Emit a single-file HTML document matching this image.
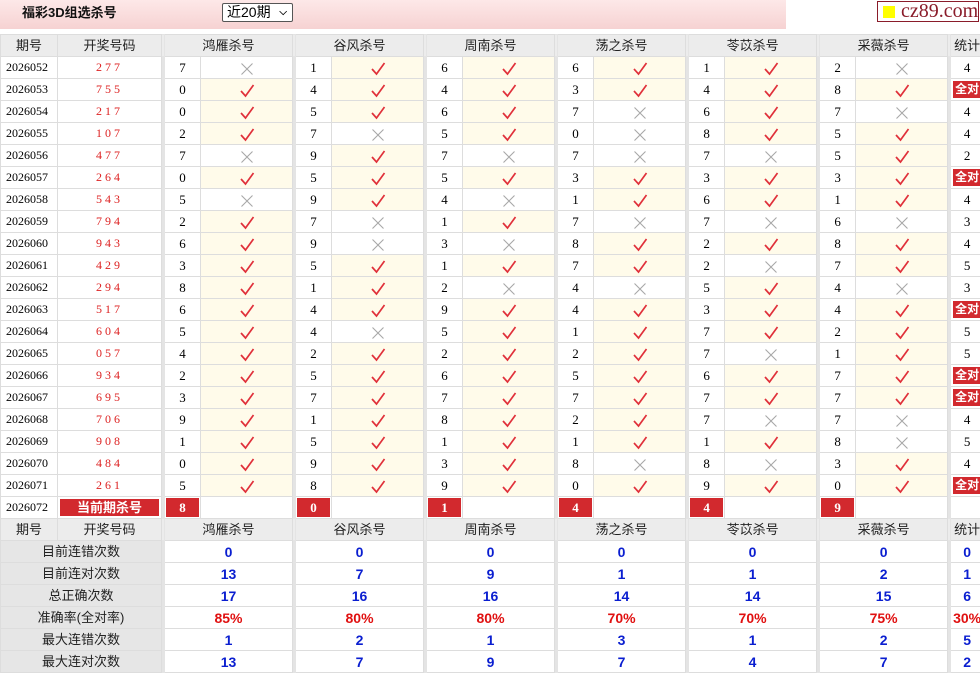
<!DOCTYPE html>
<html><head><meta charset="utf-8"><style>
*{margin:0;padding:0;box-sizing:border-box}
body{width:980px;height:670px;overflow:hidden;background:#fff;font-family:"Liberation Serif","Noto Serif CJK SC",serif;font-size:13px;color:#000}
.top{position:absolute;left:0;top:0;width:786px;height:29px;background:linear-gradient(#fde8e8,#f6d2d2)}
.title{position:absolute;left:22px;top:2px;font:bold 13px "Liberation Sans","Noto Sans CJK SC",sans-serif;color:#111}
.sel{position:absolute;left:222px;top:3px;width:71px;height:19px;border:1px solid #555;border-radius:2px;background:#fff;font:14px "Liberation Sans","Noto Sans CJK SC",sans-serif;padding-left:4px;line-height:17px}
.sel b{position:absolute;right:5px;top:0;font-size:10px}
.logo{position:absolute;left:877px;top:1px;width:102px;height:21px;border:1px solid #8a1c2a;background:#fff;font:20px "Liberation Serif",serif;color:#8a1c2a;line-height:18px;padding-left:23px}
.logo i{position:absolute;left:5px;top:4px;width:12px;height:12px;background:#ff0}
table{position:absolute;left:0;top:34px;border-collapse:collapse;table-layout:fixed;width:983px}
td{border:1px solid #ddd;height:22px;text-align:center;padding:0;white-space:nowrap;overflow:hidden;line-height:19px}
.h td{background:#ececec;font-family:"Liberation Sans","Noto Sans CJK SC",sans-serif;color:#222}
.sp{background:#e4e4e4;border-color:#e4e4e4}
.p{text-align:left;padding-left:5px;font-size:12px}
.d{color:#d22;letter-spacing:3px;font-size:12px}
.y{background:#fffbea}
.r{background:#d2292e;color:#fff;font-weight:bold;font-family:"Liberation Sans","Noto Sans CJK SC",sans-serif;box-shadow:inset 0 0 0 2px #fff}
.r2{background:#d2292e;color:#fff;font-weight:bold;box-shadow:inset 0 0 0 1px #fff}
.q{background:#d2292e;color:#fff;font-weight:bold;font-family:"Liberation Sans","Noto Sans CJK SC",sans-serif;font-size:12px;box-shadow:inset 0 0 0 2px #fff}
.lab{background:#e6e6e6;font-family:"Liberation Sans","Noto Sans CJK SC",sans-serif;color:#222}
.s{color:#0a1ed0;font:bold 14px "Liberation Sans",sans-serif}
.s.rr{color:#e01010}
svg.m{width:18px;height:18px;vertical-align:middle}
</style></head><body>
<svg width="0" height="0" style="position:absolute"><defs>
<symbol id="v" viewBox="0 0 18 18"><path d="M3 9 L7.5 14 L15.5 3" fill="none" stroke="#e0303a" stroke-width="1.7"/></symbol>
<symbol id="x" viewBox="0 0 18 18"><path d="M3.5 3.5 L14.5 14.5 M14.5 3.5 L3.5 14.5" fill="none" stroke="#a8a8a8" stroke-width="1.1"/></symbol>
</defs></svg>
<div class="top"><div class="title">福彩3D组选杀号</div><div class="sel">近20期<b>&#x2335;</b></div></div>
<div class="logo"><i></i>cz89.com</div>
<table>
<colgroup><col style="width:57px"><col style="width:104px"><col style="width:3px"><col style="width:36px"><col style="width:92px"><col style="width:3px"><col style="width:36px"><col style="width:92px"><col style="width:3px"><col style="width:36px"><col style="width:92px"><col style="width:3px"><col style="width:36px"><col style="width:92px"><col style="width:3px"><col style="width:36px"><col style="width:92px"><col style="width:3px"><col style="width:36px"><col style="width:92px"><col style="width:3px"><col style="width:33px"></colgroup>
<tr class="h"><td>期号</td><td>开奖号码</td><td class="sp"></td><td colspan="2">鸿雁杀号</td><td class="sp"></td><td colspan="2">谷风杀号</td><td class="sp"></td><td colspan="2">周南杀号</td><td class="sp"></td><td colspan="2">荡之杀号</td><td class="sp"></td><td colspan="2">苓苡杀号</td><td class="sp"></td><td colspan="2">采薇杀号</td><td class="sp"></td><td>统计</td></tr>
<tr><td class="p">2026052</td><td class="d">277</td><td class="sp"></td><td>7</td><td><svg class="m"><use href="#x"/></svg></td><td class="sp"></td><td>1</td><td class="y"><svg class="m"><use href="#v"/></svg></td><td class="sp"></td><td>6</td><td class="y"><svg class="m"><use href="#v"/></svg></td><td class="sp"></td><td>6</td><td class="y"><svg class="m"><use href="#v"/></svg></td><td class="sp"></td><td>1</td><td class="y"><svg class="m"><use href="#v"/></svg></td><td class="sp"></td><td>2</td><td><svg class="m"><use href="#x"/></svg></td><td class="sp"></td><td>4</td></tr>
<tr><td class="p">2026053</td><td class="d">755</td><td class="sp"></td><td>0</td><td class="y"><svg class="m"><use href="#v"/></svg></td><td class="sp"></td><td>4</td><td class="y"><svg class="m"><use href="#v"/></svg></td><td class="sp"></td><td>4</td><td class="y"><svg class="m"><use href="#v"/></svg></td><td class="sp"></td><td>3</td><td class="y"><svg class="m"><use href="#v"/></svg></td><td class="sp"></td><td>4</td><td class="y"><svg class="m"><use href="#v"/></svg></td><td class="sp"></td><td>8</td><td class="y"><svg class="m"><use href="#v"/></svg></td><td class="sp"></td><td class="q">全对</td></tr>
<tr><td class="p">2026054</td><td class="d">217</td><td class="sp"></td><td>0</td><td class="y"><svg class="m"><use href="#v"/></svg></td><td class="sp"></td><td>5</td><td class="y"><svg class="m"><use href="#v"/></svg></td><td class="sp"></td><td>6</td><td class="y"><svg class="m"><use href="#v"/></svg></td><td class="sp"></td><td>7</td><td><svg class="m"><use href="#x"/></svg></td><td class="sp"></td><td>6</td><td class="y"><svg class="m"><use href="#v"/></svg></td><td class="sp"></td><td>7</td><td><svg class="m"><use href="#x"/></svg></td><td class="sp"></td><td>4</td></tr>
<tr><td class="p">2026055</td><td class="d">107</td><td class="sp"></td><td>2</td><td class="y"><svg class="m"><use href="#v"/></svg></td><td class="sp"></td><td>7</td><td><svg class="m"><use href="#x"/></svg></td><td class="sp"></td><td>5</td><td class="y"><svg class="m"><use href="#v"/></svg></td><td class="sp"></td><td>0</td><td><svg class="m"><use href="#x"/></svg></td><td class="sp"></td><td>8</td><td class="y"><svg class="m"><use href="#v"/></svg></td><td class="sp"></td><td>5</td><td class="y"><svg class="m"><use href="#v"/></svg></td><td class="sp"></td><td>4</td></tr>
<tr><td class="p">2026056</td><td class="d">477</td><td class="sp"></td><td>7</td><td><svg class="m"><use href="#x"/></svg></td><td class="sp"></td><td>9</td><td class="y"><svg class="m"><use href="#v"/></svg></td><td class="sp"></td><td>7</td><td><svg class="m"><use href="#x"/></svg></td><td class="sp"></td><td>7</td><td><svg class="m"><use href="#x"/></svg></td><td class="sp"></td><td>7</td><td><svg class="m"><use href="#x"/></svg></td><td class="sp"></td><td>5</td><td class="y"><svg class="m"><use href="#v"/></svg></td><td class="sp"></td><td>2</td></tr>
<tr><td class="p">2026057</td><td class="d">264</td><td class="sp"></td><td>0</td><td class="y"><svg class="m"><use href="#v"/></svg></td><td class="sp"></td><td>5</td><td class="y"><svg class="m"><use href="#v"/></svg></td><td class="sp"></td><td>5</td><td class="y"><svg class="m"><use href="#v"/></svg></td><td class="sp"></td><td>3</td><td class="y"><svg class="m"><use href="#v"/></svg></td><td class="sp"></td><td>3</td><td class="y"><svg class="m"><use href="#v"/></svg></td><td class="sp"></td><td>3</td><td class="y"><svg class="m"><use href="#v"/></svg></td><td class="sp"></td><td class="q">全对</td></tr>
<tr><td class="p">2026058</td><td class="d">543</td><td class="sp"></td><td>5</td><td><svg class="m"><use href="#x"/></svg></td><td class="sp"></td><td>9</td><td class="y"><svg class="m"><use href="#v"/></svg></td><td class="sp"></td><td>4</td><td><svg class="m"><use href="#x"/></svg></td><td class="sp"></td><td>1</td><td class="y"><svg class="m"><use href="#v"/></svg></td><td class="sp"></td><td>6</td><td class="y"><svg class="m"><use href="#v"/></svg></td><td class="sp"></td><td>1</td><td class="y"><svg class="m"><use href="#v"/></svg></td><td class="sp"></td><td>4</td></tr>
<tr><td class="p">2026059</td><td class="d">794</td><td class="sp"></td><td>2</td><td class="y"><svg class="m"><use href="#v"/></svg></td><td class="sp"></td><td>7</td><td><svg class="m"><use href="#x"/></svg></td><td class="sp"></td><td>1</td><td class="y"><svg class="m"><use href="#v"/></svg></td><td class="sp"></td><td>7</td><td><svg class="m"><use href="#x"/></svg></td><td class="sp"></td><td>7</td><td><svg class="m"><use href="#x"/></svg></td><td class="sp"></td><td>6</td><td><svg class="m"><use href="#x"/></svg></td><td class="sp"></td><td>3</td></tr>
<tr><td class="p">2026060</td><td class="d">943</td><td class="sp"></td><td>6</td><td class="y"><svg class="m"><use href="#v"/></svg></td><td class="sp"></td><td>9</td><td><svg class="m"><use href="#x"/></svg></td><td class="sp"></td><td>3</td><td><svg class="m"><use href="#x"/></svg></td><td class="sp"></td><td>8</td><td class="y"><svg class="m"><use href="#v"/></svg></td><td class="sp"></td><td>2</td><td class="y"><svg class="m"><use href="#v"/></svg></td><td class="sp"></td><td>8</td><td class="y"><svg class="m"><use href="#v"/></svg></td><td class="sp"></td><td>4</td></tr>
<tr><td class="p">2026061</td><td class="d">429</td><td class="sp"></td><td>3</td><td class="y"><svg class="m"><use href="#v"/></svg></td><td class="sp"></td><td>5</td><td class="y"><svg class="m"><use href="#v"/></svg></td><td class="sp"></td><td>1</td><td class="y"><svg class="m"><use href="#v"/></svg></td><td class="sp"></td><td>7</td><td class="y"><svg class="m"><use href="#v"/></svg></td><td class="sp"></td><td>2</td><td><svg class="m"><use href="#x"/></svg></td><td class="sp"></td><td>7</td><td class="y"><svg class="m"><use href="#v"/></svg></td><td class="sp"></td><td>5</td></tr>
<tr><td class="p">2026062</td><td class="d">294</td><td class="sp"></td><td>8</td><td class="y"><svg class="m"><use href="#v"/></svg></td><td class="sp"></td><td>1</td><td class="y"><svg class="m"><use href="#v"/></svg></td><td class="sp"></td><td>2</td><td><svg class="m"><use href="#x"/></svg></td><td class="sp"></td><td>4</td><td><svg class="m"><use href="#x"/></svg></td><td class="sp"></td><td>5</td><td class="y"><svg class="m"><use href="#v"/></svg></td><td class="sp"></td><td>4</td><td><svg class="m"><use href="#x"/></svg></td><td class="sp"></td><td>3</td></tr>
<tr><td class="p">2026063</td><td class="d">517</td><td class="sp"></td><td>6</td><td class="y"><svg class="m"><use href="#v"/></svg></td><td class="sp"></td><td>4</td><td class="y"><svg class="m"><use href="#v"/></svg></td><td class="sp"></td><td>9</td><td class="y"><svg class="m"><use href="#v"/></svg></td><td class="sp"></td><td>4</td><td class="y"><svg class="m"><use href="#v"/></svg></td><td class="sp"></td><td>3</td><td class="y"><svg class="m"><use href="#v"/></svg></td><td class="sp"></td><td>4</td><td class="y"><svg class="m"><use href="#v"/></svg></td><td class="sp"></td><td class="q">全对</td></tr>
<tr><td class="p">2026064</td><td class="d">604</td><td class="sp"></td><td>5</td><td class="y"><svg class="m"><use href="#v"/></svg></td><td class="sp"></td><td>4</td><td><svg class="m"><use href="#x"/></svg></td><td class="sp"></td><td>5</td><td class="y"><svg class="m"><use href="#v"/></svg></td><td class="sp"></td><td>1</td><td class="y"><svg class="m"><use href="#v"/></svg></td><td class="sp"></td><td>7</td><td class="y"><svg class="m"><use href="#v"/></svg></td><td class="sp"></td><td>2</td><td class="y"><svg class="m"><use href="#v"/></svg></td><td class="sp"></td><td>5</td></tr>
<tr><td class="p">2026065</td><td class="d">057</td><td class="sp"></td><td>4</td><td class="y"><svg class="m"><use href="#v"/></svg></td><td class="sp"></td><td>2</td><td class="y"><svg class="m"><use href="#v"/></svg></td><td class="sp"></td><td>2</td><td class="y"><svg class="m"><use href="#v"/></svg></td><td class="sp"></td><td>2</td><td class="y"><svg class="m"><use href="#v"/></svg></td><td class="sp"></td><td>7</td><td><svg class="m"><use href="#x"/></svg></td><td class="sp"></td><td>1</td><td class="y"><svg class="m"><use href="#v"/></svg></td><td class="sp"></td><td>5</td></tr>
<tr><td class="p">2026066</td><td class="d">934</td><td class="sp"></td><td>2</td><td class="y"><svg class="m"><use href="#v"/></svg></td><td class="sp"></td><td>5</td><td class="y"><svg class="m"><use href="#v"/></svg></td><td class="sp"></td><td>6</td><td class="y"><svg class="m"><use href="#v"/></svg></td><td class="sp"></td><td>5</td><td class="y"><svg class="m"><use href="#v"/></svg></td><td class="sp"></td><td>6</td><td class="y"><svg class="m"><use href="#v"/></svg></td><td class="sp"></td><td>7</td><td class="y"><svg class="m"><use href="#v"/></svg></td><td class="sp"></td><td class="q">全对</td></tr>
<tr><td class="p">2026067</td><td class="d">695</td><td class="sp"></td><td>3</td><td class="y"><svg class="m"><use href="#v"/></svg></td><td class="sp"></td><td>7</td><td class="y"><svg class="m"><use href="#v"/></svg></td><td class="sp"></td><td>7</td><td class="y"><svg class="m"><use href="#v"/></svg></td><td class="sp"></td><td>7</td><td class="y"><svg class="m"><use href="#v"/></svg></td><td class="sp"></td><td>7</td><td class="y"><svg class="m"><use href="#v"/></svg></td><td class="sp"></td><td>7</td><td class="y"><svg class="m"><use href="#v"/></svg></td><td class="sp"></td><td class="q">全对</td></tr>
<tr><td class="p">2026068</td><td class="d">706</td><td class="sp"></td><td>9</td><td class="y"><svg class="m"><use href="#v"/></svg></td><td class="sp"></td><td>1</td><td class="y"><svg class="m"><use href="#v"/></svg></td><td class="sp"></td><td>8</td><td class="y"><svg class="m"><use href="#v"/></svg></td><td class="sp"></td><td>2</td><td class="y"><svg class="m"><use href="#v"/></svg></td><td class="sp"></td><td>7</td><td><svg class="m"><use href="#x"/></svg></td><td class="sp"></td><td>7</td><td><svg class="m"><use href="#x"/></svg></td><td class="sp"></td><td>4</td></tr>
<tr><td class="p">2026069</td><td class="d">908</td><td class="sp"></td><td>1</td><td class="y"><svg class="m"><use href="#v"/></svg></td><td class="sp"></td><td>5</td><td class="y"><svg class="m"><use href="#v"/></svg></td><td class="sp"></td><td>1</td><td class="y"><svg class="m"><use href="#v"/></svg></td><td class="sp"></td><td>1</td><td class="y"><svg class="m"><use href="#v"/></svg></td><td class="sp"></td><td>1</td><td class="y"><svg class="m"><use href="#v"/></svg></td><td class="sp"></td><td>8</td><td><svg class="m"><use href="#x"/></svg></td><td class="sp"></td><td>5</td></tr>
<tr><td class="p">2026070</td><td class="d">484</td><td class="sp"></td><td>0</td><td class="y"><svg class="m"><use href="#v"/></svg></td><td class="sp"></td><td>9</td><td class="y"><svg class="m"><use href="#v"/></svg></td><td class="sp"></td><td>3</td><td class="y"><svg class="m"><use href="#v"/></svg></td><td class="sp"></td><td>8</td><td><svg class="m"><use href="#x"/></svg></td><td class="sp"></td><td>8</td><td><svg class="m"><use href="#x"/></svg></td><td class="sp"></td><td>3</td><td class="y"><svg class="m"><use href="#v"/></svg></td><td class="sp"></td><td>4</td></tr>
<tr><td class="p">2026071</td><td class="d">261</td><td class="sp"></td><td>5</td><td class="y"><svg class="m"><use href="#v"/></svg></td><td class="sp"></td><td>8</td><td class="y"><svg class="m"><use href="#v"/></svg></td><td class="sp"></td><td>9</td><td class="y"><svg class="m"><use href="#v"/></svg></td><td class="sp"></td><td>0</td><td class="y"><svg class="m"><use href="#v"/></svg></td><td class="sp"></td><td>9</td><td class="y"><svg class="m"><use href="#v"/></svg></td><td class="sp"></td><td>0</td><td class="y"><svg class="m"><use href="#v"/></svg></td><td class="sp"></td><td class="q">全对</td></tr>
<tr><td class="p">2026072</td><td class="r">当前期杀号</td><td class="sp"></td><td class="r2">8</td><td></td><td class="sp"></td><td class="r2">0</td><td></td><td class="sp"></td><td class="r2">1</td><td></td><td class="sp"></td><td class="r2">4</td><td></td><td class="sp"></td><td class="r2">4</td><td></td><td class="sp"></td><td class="r2">9</td><td></td><td class="sp"></td><td></td></tr>
<tr class="h"><td>期号</td><td>开奖号码</td><td class="sp"></td><td colspan="2">鸿雁杀号</td><td class="sp"></td><td colspan="2">谷风杀号</td><td class="sp"></td><td colspan="2">周南杀号</td><td class="sp"></td><td colspan="2">荡之杀号</td><td class="sp"></td><td colspan="2">苓苡杀号</td><td class="sp"></td><td colspan="2">采薇杀号</td><td class="sp"></td><td>统计</td></tr>
<tr><td colspan="2" class="lab">目前连错次数</td><td class="sp"></td><td colspan="2" class="s">0</td><td class="sp"></td><td colspan="2" class="s">0</td><td class="sp"></td><td colspan="2" class="s">0</td><td class="sp"></td><td colspan="2" class="s">0</td><td class="sp"></td><td colspan="2" class="s">0</td><td class="sp"></td><td colspan="2" class="s">0</td><td class="sp"></td><td class="s">0</td></tr>
<tr><td colspan="2" class="lab">目前连对次数</td><td class="sp"></td><td colspan="2" class="s">13</td><td class="sp"></td><td colspan="2" class="s">7</td><td class="sp"></td><td colspan="2" class="s">9</td><td class="sp"></td><td colspan="2" class="s">1</td><td class="sp"></td><td colspan="2" class="s">1</td><td class="sp"></td><td colspan="2" class="s">2</td><td class="sp"></td><td class="s">1</td></tr>
<tr><td colspan="2" class="lab">总正确次数</td><td class="sp"></td><td colspan="2" class="s">17</td><td class="sp"></td><td colspan="2" class="s">16</td><td class="sp"></td><td colspan="2" class="s">16</td><td class="sp"></td><td colspan="2" class="s">14</td><td class="sp"></td><td colspan="2" class="s">14</td><td class="sp"></td><td colspan="2" class="s">15</td><td class="sp"></td><td class="s">6</td></tr>
<tr><td colspan="2" class="lab">准确率(全对率)</td><td class="sp"></td><td colspan="2" class="s rr">85%</td><td class="sp"></td><td colspan="2" class="s rr">80%</td><td class="sp"></td><td colspan="2" class="s rr">80%</td><td class="sp"></td><td colspan="2" class="s rr">70%</td><td class="sp"></td><td colspan="2" class="s rr">70%</td><td class="sp"></td><td colspan="2" class="s rr">75%</td><td class="sp"></td><td class="s rr">30%</td></tr>
<tr><td colspan="2" class="lab">最大连错次数</td><td class="sp"></td><td colspan="2" class="s">1</td><td class="sp"></td><td colspan="2" class="s">2</td><td class="sp"></td><td colspan="2" class="s">1</td><td class="sp"></td><td colspan="2" class="s">3</td><td class="sp"></td><td colspan="2" class="s">1</td><td class="sp"></td><td colspan="2" class="s">2</td><td class="sp"></td><td class="s">5</td></tr>
<tr><td colspan="2" class="lab">最大连对次数</td><td class="sp"></td><td colspan="2" class="s">13</td><td class="sp"></td><td colspan="2" class="s">7</td><td class="sp"></td><td colspan="2" class="s">9</td><td class="sp"></td><td colspan="2" class="s">7</td><td class="sp"></td><td colspan="2" class="s">4</td><td class="sp"></td><td colspan="2" class="s">7</td><td class="sp"></td><td class="s">2</td></tr>
</table>
</body></html>
